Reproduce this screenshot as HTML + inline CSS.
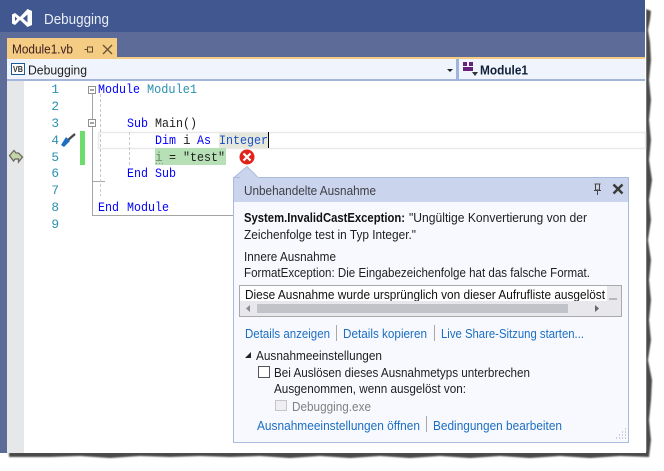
<!DOCTYPE html>
<html><head><meta charset="utf-8"><style>
html,body{margin:0;padding:0;background:#fff;width:664px;height:471px;overflow:hidden}
svg{display:block}
text{font-family:"Liberation Sans",sans-serif;font-size:12.6px;white-space:pre}
.m{font-family:"Liberation Mono",monospace;font-size:12.8px}
.n{fill:#2b91af;text-anchor:end}
.k{fill:#0000ff}
.l{fill:#1b6ec2}
.t{fill:#1e1e1e}
</style></head><body>
<svg width="664" height="471" viewBox="0 0 664 471" xmlns="http://www.w3.org/2000/svg">
<defs><filter id="b" x="-5%" y="-5%" width="110%" height="110%"><feGaussianBlur stdDeviation="0.8"/></filter></defs>
<path filter="url(#b)" fill="#4a4a4a" d="M646 9L651 11L650 20L648 30L650 42L651 60L649 80L651 100L649 120L651 140L649 160L652 180L649 200L651 220L648 240L651 260L649 280L651 300L649 320L651 340L648 360L652 380L651 400L649 420L651 440L649 457L620 456L590 458L560 456L530 458L500 456L470 458L440 456L410 458L380 456L350 458L320 456L290 458L260 456L230 457L200 456L170 457L140 456L110 458L80 456L50 457L9 457L9 452L646 452Z"/>
<rect x="0" y="0" width="646" height="453" fill="#fff"/>
<rect x="0" y="0" width="645" height="32" fill="#41578f"/>
<rect x="0" y="32" width="645" height="26" fill="#5c6b97"/>
<rect x="0" y="58" width="7" height="395" fill="#5c6b97"/>
<path fill="#fff" d="M12 14.5L15 13L20 17L27.5 9L32 11V25L27.5 27L20 20L15 25L12 23.5V14.5ZM15 16.5V21L17.3 18.8ZM27.5 14.5L23 18.5L27.5 22.5Z" fill-rule="evenodd"/>
<text x="44" y="24" fill="#e9edf6" textLength="65" lengthAdjust="spacingAndGlyphs" style="font-size:14.5px">Debugging</text>

<rect x="7" y="38" width="110" height="20" fill="#f5cc84"/>
<rect x="7" y="57" width="638" height="2" fill="#f5cc84"/>
<text x="12" y="53.500" fill="#3b1d1d" textLength="61" lengthAdjust="spacingAndGlyphs" style="font-size:13px">Module1.vb</text>
<path d="M84.5 49.5H87.5M87.5 47V52H92.5V47ZM92.500 46.500V52.500" stroke="#5e4a2c" fill="none"/>
<path d="M103 45L112 54M112 45L103 54" stroke="#6b5535" stroke-width="1.4"/>

<rect x="7" y="59" width="638" height="21" fill="#f0f4fc"/>
<rect x="7" y="79" width="638" height="2" fill="#a5b6dc"/>
<rect x="456" y="59" width="3" height="21" fill="#a0b3dc"/>
<rect x="11.500" y="63.500" width="13" height="11" fill="#fff" stroke="#1c5a94"/>
<text x="13" y="72" fill="#333" textLength="10" lengthAdjust="spacingAndGlyphs" style="font-size:8px;font-weight:bold">VB</text>
<text x="28" y="74.500" fill="#1e1e1e" textLength="59" lengthAdjust="spacingAndGlyphs">Debugging</text>
<path d="M447 69H453L450 72Z" fill="#222"/>
<path d="M463 62H467V66H463ZM469 62H473V66H469ZM463 67H473V71H463Z" fill="#68217a"/>
<path d="M472 72H478L475 76Z" fill="#333"/>
<text x="480" y="74.500" fill="#10203a" font-weight="bold" textLength="48" lengthAdjust="spacingAndGlyphs">Module1</text>

<rect x="7" y="81" width="17" height="372" fill="#e6e7e8"/>
<path d="M9.500 155.500L14 150.500L16 153H18.500L22.500 157L18.500 162V159H15L13.500 161Z" fill="#c3d6a8" stroke="#6a6a62" stroke-width="1.300"/>

<g class="m">
<text class="m n" x="59" y="93">1</text>
<text class="m n" x="59" y="110">2</text>
<text class="m n" x="59" y="127">3</text>
<text class="m n" x="59" y="144">4</text>
<text class="m n" x="59" y="161">5</text>
<text class="m n" x="59" y="177">6</text>
<text class="m n" x="59" y="194">7</text>
<text class="m n" x="59" y="211">8</text>
<text class="m n" x="59" y="228">9</text>
</g>
<path d="M68 140L75 134" stroke="#4a4a4a" stroke-width="2.400"/>
<path d="M61 145L66 137L70 141L64 147Z" fill="#1f6fc0"/>
<rect x="80" y="131" width="5" height="34" fill="#6cdc6c"/>

<rect x="98.500" y="132.500" width="547" height="16" fill="#fff" stroke="#e9e9e9" stroke-width="1.500"/>
<rect x="155" y="148" width="71" height="17" fill="#b7e0b7"/>
<rect x="219" y="133" width="49" height="15" fill="#e6e8dc"/>
<rect x="268" y="132" width="1" height="16" fill="#000"/>

<path d="M92.500 94V215.500H233" stroke="#a5a5a5" fill="none"/>
<path d="M92.500 181.500H105" stroke="#a5a5a5" fill="none"/>
<rect x="88.500" y="86.500" width="7" height="7" fill="#fff" stroke="#909090"/>
<path d="M90 90H94" stroke="#444"/>
<rect x="88.500" y="119.500" width="7" height="7" fill="#fff" stroke="#909090"/>
<path d="M90 123H94" stroke="#444"/>
<path d="M100.500 94V196" stroke="#c8c8c8" stroke-dasharray="3 2" fill="none"/>
<path d="M129.500 132V165" stroke="#c8c8c8" stroke-dasharray="3 2" fill="none"/>

<text class="m k" x="98" y="93" textLength="42" lengthAdjust="spacingAndGlyphs">Module</text>
<text class="m" x="147" y="93" fill="#2b91af" textLength="50" lengthAdjust="spacingAndGlyphs">Module1</text>
<text class="m k" x="127" y="127" textLength="21" lengthAdjust="spacingAndGlyphs">Sub</text>
<text class="m t" x="155" y="127" textLength="42" lengthAdjust="spacingAndGlyphs">Main()</text>
<text class="m k" x="155" y="144" textLength="21" lengthAdjust="spacingAndGlyphs">Dim</text>
<text class="m t" x="183" y="144">i</text>
<text class="m k" x="197" y="144" textLength="14" lengthAdjust="spacingAndGlyphs">As</text>
<text class="m" x="219" y="144" fill="#1b50c8" textLength="49" lengthAdjust="spacingAndGlyphs">Integer</text>
<text class="m" x="155" y="161" fill="#6f8a6f">i</text>
<text class="m t" x="169" y="161" textLength="56" lengthAdjust="spacingAndGlyphs">= "test"</text>
<path d="M156 163.500H165" stroke="#8a9a8a" stroke-dasharray="1 2" fill="none"/>
<text class="m k" x="127" y="177" textLength="21" lengthAdjust="spacingAndGlyphs">End</text>
<text class="m k" x="155" y="177" textLength="21" lengthAdjust="spacingAndGlyphs">Sub</text>
<text class="m k" x="98" y="211" textLength="21" lengthAdjust="spacingAndGlyphs">End</text>
<text class="m k" x="127" y="211" textLength="42" lengthAdjust="spacingAndGlyphs">Module</text>

<circle cx="247" cy="157" r="7.500" fill="#e2231a"/>
<path d="M243.500 153.500L250.500 160.500M250.500 153.500L243.500 160.500" stroke="#fff" stroke-width="2.200"/>

<path d="M233.500 178L247 166.500L258.500 178" fill="#cad4ec" stroke="#a8bbdd"/>
<rect x="233.500" y="177.500" width="395" height="265" fill="#f8f9ff" stroke="#a8bbdd"/>
<rect x="234" y="178" width="394" height="24" fill="#cad4ec"/>
<rect x="240" y="177" width="18" height="2" fill="#cad4ec"/>
<text x="244" y="195" fill="#3f3f46" textLength="132" lengthAdjust="spacingAndGlyphs">Unbehandelte Ausnahme</text>
<path d="M594.500 184H600.500M595.500 184V190H599.500V184M594 190.500H601M597.500 191V195" stroke="#444" fill="none"/>
<path d="M613.500 184.500L622.500 193.500M622.500 184.500L613.500 193.500" stroke="#3a3a3a" stroke-width="2.400"/>

<text x="244" y="222" fill="#111" font-weight="bold" textLength="161" lengthAdjust="spacingAndGlyphs">System.InvalidCastException:</text>
<text x="409" y="222" fill="#1e1e1e" textLength="178" lengthAdjust="spacingAndGlyphs">"Ungültige Konvertierung von der</text>
<text x="244" y="239" fill="#1e1e1e" textLength="172" lengthAdjust="spacingAndGlyphs">Zeichenfolge test in Typ Integer."</text>
<text x="244" y="261" fill="#1e1e1e" textLength="92" lengthAdjust="spacingAndGlyphs">Innere Ausnahme</text>
<text x="244" y="277" fill="#1e1e1e" textLength="346" lengthAdjust="spacingAndGlyphs">FormatException: Die Eingabezeichenfolge hat das falsche Format.</text>

<rect x="239.500" y="285.500" width="382" height="31" fill="#fff" stroke="#a9a9a9"/>
<text x="245" y="299" fill="#111" textLength="360" lengthAdjust="spacingAndGlyphs">Diese Ausnahme wurde ursprünglich von dieser Aufrufliste ausgelöst</text>
<rect x="240" y="301" width="381" height="15" fill="#e8e8ec"/>
<rect x="607" y="286" width="14" height="15" fill="#e8e8ec"/>
<path d="M609 299H617" stroke="#888"/>
<rect x="257" y="304" width="311" height="9" fill="#c2c3c9"/>
<path d="M250 305V312L246 308.500Z" fill="#8a8a92"/>
<path d="M595 305V312L599 308.500Z" fill="#666"/>

<text class="l" x="245" y="338" textLength="85" lengthAdjust="spacingAndGlyphs">Details anzeigen</text>
<rect x="336" y="325" width="1" height="16" fill="#a9a9a9"/>
<text class="l" x="343" y="338" textLength="84" lengthAdjust="spacingAndGlyphs">Details kopieren</text>
<rect x="434" y="325" width="1" height="16" fill="#a9a9a9"/>
<text class="l" x="441" y="338" textLength="143" lengthAdjust="spacingAndGlyphs">Live Share-Sitzung starten...</text>

<path d="M245 358H251V352Z" fill="#222"/>
<text x="256" y="360" fill="#1e1e1e" textLength="126" lengthAdjust="spacingAndGlyphs">Ausnahmeeinstellungen</text>
<rect x="258.500" y="366.500" width="11" height="11" fill="#fff" stroke="#555"/>
<text x="274" y="377" fill="#1e1e1e" textLength="256" lengthAdjust="spacingAndGlyphs">Bei Auslösen dieses Ausnahmetyps unterbrechen</text>
<text x="274" y="393" fill="#1e1e1e" textLength="192" lengthAdjust="spacingAndGlyphs">Ausgenommen, wenn ausgelöst von:</text>
<rect x="275.500" y="400.500" width="11" height="10" fill="#efeff2" stroke="#c6c6c6"/>
<text x="292" y="411" fill="#808080" textLength="79" lengthAdjust="spacingAndGlyphs">Debugging.exe</text>
<text class="l" x="257" y="430" textLength="163" lengthAdjust="spacingAndGlyphs">Ausnahmeeinstellungen öffnen</text>
<rect x="426" y="416" width="1" height="16" fill="#a9a9a9"/>
<text class="l" x="433" y="430" textLength="129" lengthAdjust="spacingAndGlyphs">Bedingungen bearbeiten</text>
<path d="M625 429h1M622 432h1M625 432h1M619 435h1M622 435h1M625 435h1M616 438h1M619 438h1M622 438h1M625 438h1" stroke="#9aa4b8" fill="none"/>
</svg>
</body></html>
